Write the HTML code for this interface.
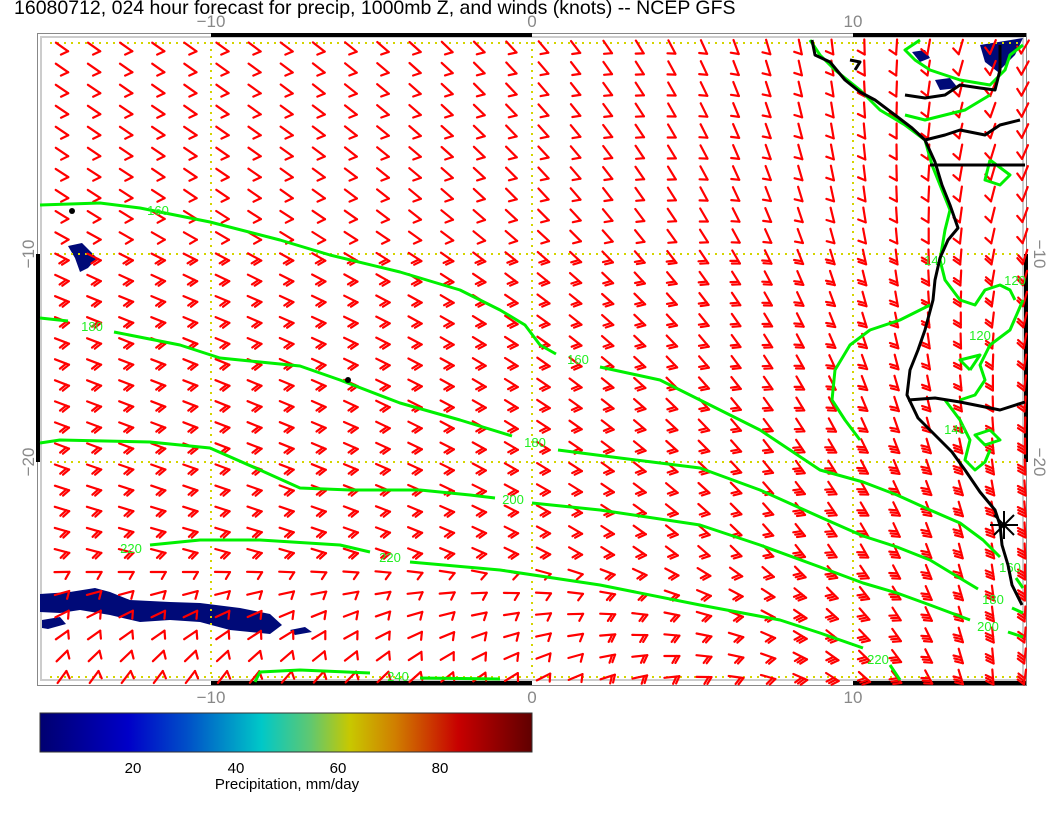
<!DOCTYPE html>
<html><head><meta charset="utf-8"><style>
body{margin:0;background:#fff;width:1056px;height:816px;overflow:hidden;font-family:"Liberation Sans",sans-serif}
svg{position:absolute;left:0;top:0}
</style></head><body>
<svg id="s" width="1056" height="816" xmlns="http://www.w3.org/2000/svg">
<defs><linearGradient id="cb" x1="0" x2="1">
<stop offset="0" stop-color="#000070"/><stop offset="0.18" stop-color="#0000c8"/><stop offset="0.3" stop-color="#0050c8"/><stop offset="0.45" stop-color="#00c8c8"/><stop offset="0.55" stop-color="#60c870"/><stop offset="0.63" stop-color="#c8c800"/><stop offset="0.72" stop-color="#d08000"/><stop offset="0.85" stop-color="#c80000"/><stop offset="1" stop-color="#600000"/></linearGradient></defs>
<text x="14" y="14" font-size="19.5" fill="#000">16080712, 024 hour forecast for precip, 1000mb Z, and winds (knots) -- NCEP GFS</text>
<g fill="#888" font-size="17" text-anchor="middle">
<text x="211" y="27">−10</text><text x="532" y="27">0</text><text x="853" y="27">10</text>
<text x="211" y="703">−10</text><text x="532" y="703">0</text><text x="853" y="703">10</text>
<text transform="translate(34,254) rotate(-90)">−10</text><text transform="translate(34,462) rotate(-90)">−20</text>
<text transform="translate(1034,254) rotate(90)">−10</text><text transform="translate(1034,462) rotate(90)">−20</text>
</g>
<rect x="37.5" y="33.5" width="989" height="652" fill="none" stroke="#888" stroke-width="1"/>
<rect x="41" y="37" width="982" height="643" fill="none" stroke="#ccc" stroke-width="2"/>
<g stroke="#000" stroke-width="4"><line x1="211" y1="35" x2="532" y2="35"/><line x1="853" y1="35" x2="1026" y2="35"/><line x1="211" y1="683" x2="532" y2="683"/><line x1="853" y1="683" x2="1026" y2="683"/><line x1="38" y1="254" x2="38" y2="462"/><line x1="1026" y1="254" x2="1026" y2="462"/></g>
<g id="precip" fill="#000a78">
<path d="M40,594 L70,592 L95,588 L110,592 L130,600 L170,602 L200,603 L240,608 L270,614 L282,625 L270,634 L230,630 L200,622 L170,620 L140,622 L110,615 L80,610 L60,613 L40,612Z"/>
<path d="M42,620 L60,617 L66,624 L48,629 L42,628Z"/>
<path d="M290,630 L305,627 L312,632 L295,635Z"/>
<path d="M68,246 L82,243 L97,258 L88,268 L80,272 L75,258Z"/>
<path d="M980,45 L1023,38 L1015,55 L1005,65 L998,72 L985,62Z"/>
<path d="M912,52 L925,50 L930,58 L920,62Z"/><path d="M935,80 L950,78 L958,88 L940,90Z"/>
</g>
<g stroke="#d4d400" stroke-width="2" stroke-dasharray="2 5" fill="none">
<line x1="211" y1="42" x2="211" y2="678"/><line x1="532" y1="42" x2="532" y2="678"/><line x1="853" y1="42" x2="853" y2="678"/>
<line x1="50" y1="43" x2="1020" y2="43"/><line x1="50" y1="254" x2="1020" y2="254"/><line x1="50" y1="462" x2="1020" y2="462"/><line x1="50" y1="677" x2="1020" y2="677"/>
</g>
<g id="barbs" stroke="#ff0000" stroke-width="2.2" fill="none" stroke-linecap="round"></g>
<g stroke="#00f000" stroke-width="3" fill="none" stroke-linejoin="round">
<polyline points="40,205 100,203 140,208 210,222 280,240 330,255 400,272 460,290 500,310 525,325 540,345 556,354"/>
<polyline points="600,367 660,380 700,400 760,430 820,470 863,482 897,495 930,510 960,523 983,540 1000,557"/>
<polyline points="1016,578 1023,588"/>
<polyline points="40,318 68,321"/>
<polyline points="114,332 180,345 220,358 260,362 300,366 340,380 400,403 460,420 512,436"/>
<polyline points="558,450 620,458 700,468 760,490 820,517 863,536 897,547 930,560 963,580 978,589"/>
<polyline points="1012,608 1023,613"/>
<polyline points="40,443 60,440 150,442 210,448 260,470 300,488 350,490 420,490 470,495 495,498"/>
<polyline points="532,503 600,510 700,525 760,545 820,567 863,583 897,593 930,605 970,620"/>
<polyline points="1008,632 1023,637"/>
<polyline points="150,545 200,540 260,540 340,545 370,552"/>
<polyline points="410,562 500,570 600,585 700,605 780,620 820,633 863,648"/>
<polyline points="890,665 900,680"/>
<polyline points="255,682 260,672 300,670 370,673"/><polyline points="420,678 500,679"/>
<polyline points="810,40 820,55 835,70 860,90 880,110 905,125 925,140 932,165 940,185 950,210 945,230 940,260 945,280 960,300 975,305 985,290 1000,285 1010,290 1015,300"/>
<polyline points="1023,300 1010,330 990,345 980,365 985,380 975,395 960,400"/>
<polyline points="835,370 850,345 870,330 900,320 930,305"/>
<polyline points="835,370 832,400 845,420 860,440"/>
<polyline points="920,40 905,50 915,60 930,70 960,80 990,85 1005,70 1010,55 1023,45"/>
<polyline points="905,115 925,120 965,110 990,95"/>
<polyline points="990,160 1010,175 1000,185 985,180 990,160"/>
<polyline points="970,370 980,355 960,360 970,370"/>
<polyline points="990,430 1000,440 985,445 975,435 990,430"/>
<polyline points="945,400 960,420 970,440 965,460 975,470 985,462 990,450"/>
</g>
<g fill="#22ee22" font-size="13" text-anchor="middle">
<text x="158" y="215">160</text><text x="578" y="364">160</text><text x="92" y="331">180</text><text x="535" y="447">180</text><text x="513" y="504">200</text><text x="390" y="562">220</text><text x="131" y="553">220</text><text x="398" y="681">240</text><text x="878" y="664">220</text><text x="993" y="604">180</text><text x="988" y="631">200</text><text x="1010" y="572">160</text><text x="955" y="434">140</text><text x="935" y="265">140</text><text x="1015" y="285">120</text><text x="980" y="340">120</text>
</g>
<g stroke="#000" stroke-width="3" fill="none" stroke-linejoin="round">
<polyline points="812,40 815,55 830,62 845,80 860,92 875,100 895,115 912,128 925,140 935,162 942,185 950,205 958,228 948,240 940,258 935,280 933,300 925,330 918,350 910,370 907,395 918,418 935,435 952,452 965,470 980,492 995,510 1000,525 1002,545 1008,565 1012,585 1022,605"/>
<polyline points="930,165 1025,165"/>
<polyline points="925,140 945,135 960,130 985,135 1000,125 1020,120"/>
<polyline points="905,95 925,98 945,95 960,85 980,88 995,90 1000,70 1000,45"/>
<polyline points="908,400 935,398 960,402 1000,410 1025,402"/>
<polyline points="850,60 860,62 855,70"/>
</g>
<circle cx="72" cy="211" r="3" fill="#000"/><circle cx="348" cy="380" r="3" fill="#000"/>
<g stroke="#000" stroke-width="2"><line x1="990" y1="525" x2="1018" y2="525"/><line x1="1004" y1="511" x2="1004" y2="539"/><line x1="994" y1="515" x2="1014" y2="535"/><line x1="994" y1="535" x2="1014" y2="515"/></g>
<rect x="40" y="713" width="492" height="39" fill="url(#cb)" stroke="#333" stroke-width="1"/>
<g font-size="15" fill="#000" text-anchor="middle"><text x="133" y="773">20</text><text x="236" y="773">40</text><text x="338" y="773">60</text><text x="440" y="773">80</text><text x="287" y="789">Precipitation, mm/day</text></g>
</svg>
<script>
(function(){
var g=document.getElementById('barbs'),out='';
function lerp(a,b,t){return a+(b-a)*t}
function leftA(y){var p=[[40,35],[200,33],[300,22],[450,20],[550,15],[600,-20],[680,-55]];for(var i=0;i<p.length-1;i++){if(y<=p[i+1][0]){return lerp(p[i][1],p[i+1][1],(y-p[i][0])/(p[i+1][0]-p[i][0]))}}return -55}
function rightA(y){var p=[[40,115],[300,100],[500,80],[680,88]];for(var i=0;i<p.length-1;i++){if(y<=p[i+1][0]){return lerp(p[i][1],p[i+1][1],(y-p[i][0])/(p[i+1][0]-p[i][0]))}}return 88}
for(var r=0;r<31;r++){var y=47+r*21;for(var c=0;c<31;c++){var x=62+c*32.1;
var t=Math.pow((x-40)/960,2.6);var a=lerp(leftA(y),rightA(y),t)*Math.PI/180;
var L=15,dx=Math.cos(a),dy=Math.sin(a);
var x0=x-dx*L/2,y0=y-dy*L/2,x1=x+dx*L/2,y1=y+dy*L/2;
out+='<line x1="'+x0.toFixed(1)+'" y1="'+y0.toFixed(1)+'" x2="'+x1.toFixed(1)+'" y2="'+y1.toFixed(1)+'"/>';
var n=y<250?1:2;if(x>800&&y>430)n=3;if(y>560&&x<600)n=1;
var ta=a+2.1;for(var k=0;k<n;k++){var bx=x1-dx*3*k,by=y1-dy*3*k;
out+='<line x1="'+bx.toFixed(1)+'" y1="'+by.toFixed(1)+'" x2="'+(bx+Math.cos(ta)*8).toFixed(1)+'" y2="'+(by+Math.sin(ta)*8).toFixed(1)+'"/>';}
}}
g.innerHTML=out;})();
</script>
</body></html>
